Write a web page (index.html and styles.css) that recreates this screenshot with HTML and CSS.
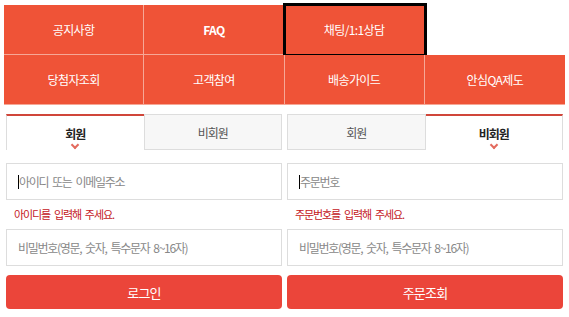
FILE: index.html
```html
<!DOCTYPE html>
<html>
  <head>
    <meta name="viewport" content="width=device-width, initial-scale=1" />
    <link rel="stylesheet" href="styles.css">
  </head>
  <body>
    <div class="nav">
      <a class="nav-item" href="#">공지사항</a>
      <a class="nav-item nav-bold" href="#">FAQ</a>
      <a class="nav-item nav-focus" href="#">채팅/1:1상담</a>
      <span class="nav-empty"></span>
      <a class="nav-item" href="#">당첨자조회</a>
      <a class="nav-item" href="#">고객참여</a>
      <a class="nav-item" href="#">배송가이드</a>
      <a class="nav-item" href="#">안심QA제도</a>
    </div>

    <div class="panels">
      <!-- 회원 로그인 -->
      <div class="panel">
        <div class="tabs">
          <div class="tab active left">회원</div>
          <div class="tab">비회원</div>
        </div>
        <div class="field"><span class="caret"></span><span class="ph">아이디 또는 이메일주소</span></div>
        <p class="error">아이디를 입력해 주세요.</p>
        <div class="field"><span class="ph">비밀번호(영문, 숫자, 특수문자 8~16자)</span></div>
        <button class="btn">로그인</button>
      </div>

      <!-- 비회원 주문조회 -->
      <div class="panel">
        <div class="tabs">
          <div class="tab">회원</div>
          <div class="tab active right">비회원</div>
        </div>
        <div class="field"><span class="caret"></span><span class="ph">주문번호</span></div>
        <p class="error">주문번호를 입력해 주세요.</p>
        <div class="field"><span class="ph">비밀번호(영문, 숫자, 특수문자 8~16자)</span></div>
        <button class="btn">주문조회</button>
      </div>
    </div>
  </body>
</html>
```

FILE: styles.css
```css
body {
  margin: 0;
  background: #fff;
  font-family: "Noto Sans CJK KR", "Noto Sans", sans-serif;
  color: #333;
}

/* 상단 메뉴 */
.nav {
  display: grid;
  grid-template-columns: repeat(4, 1fr);
  grid-auto-rows: 50px;
  margin: 5px 4px 0 4px;
}

.nav-item {
  display: flex;
  align-items: center;
  justify-content: center;
  background: #ef5337;
  color: #fff;
  font-size: 12px;
  letter-spacing: -0.6px;
  text-decoration: none;
  border-right: 1px solid #f6a796;
  border-bottom: 1px solid #f6a796;
}

.nav-item:nth-child(8) {
  border-right: none;
}

.nav-bold {
  font-weight: bold;
}

.nav-focus {
  outline: 3px solid #000;
  outline-offset: -1px;
}

/* 로그인 영역 */
.panels {
  display: flex;
  gap: 5px;
  margin: 9px 6px 0 6px;
}

.panel {
  flex: 1;
}

.tabs {
  display: flex;
  height: 36px;
}

.tab {
  flex: 1;
  display: flex;
  align-items: center;
  justify-content: center;
  background: #f7f7f7;
  border: 1px solid #ddd;
  font-size: 12px;
  letter-spacing: -1px;
  color: #555;
  box-sizing: border-box;
}

.tab.active {
  position: relative;
  background: #fff;
  border: none;
  border-top: 2px solid #d0463a;
  font-weight: bold;
  color: #222;
}

.tab.left {
  border-left: 1px solid #ddd;
}

.tab.right {
  border-right: 1px solid #ddd;
}

.tab.active:after {
  content: "";
  position: absolute;
  left: 50%;
  bottom: 2px;
  width: 4px;
  height: 4px;
  margin-left: -3px;
  border-right: 2px solid #e36a5e;
  border-bottom: 2px solid #e36a5e;
  transform: rotate(45deg);
}

.field {
  display: flex;
  align-items: center;
  height: 37px;
  border: 1px solid #ddd;
  box-sizing: border-box;
  padding-left: 11px;
  margin-top: 13px;
}

.caret {
  width: 1px;
  height: 14px;
  background: #000;
}

.ph {
  font-size: 12px;
  letter-spacing: -1.3px;
  word-spacing: 2.5px;
  color: #888;
}

.error {
  margin: 6px 0 0 8px;
  height: 16px;
  font-size: 11px;
  letter-spacing: -1.1px;
  word-spacing: 2.5px;
  color: #c4161c;
}

.error + .field {
  margin-top: 7px;
}

.btn {
  display: block;
  width: 100%;
  height: 34px;
  margin-top: 9px;
  border: none;
  border-radius: 4px;
  background: #eb453a;
  color: #fff;
  font-family: inherit;
  font-size: 13px;
  letter-spacing: -0.8px;
}
```
